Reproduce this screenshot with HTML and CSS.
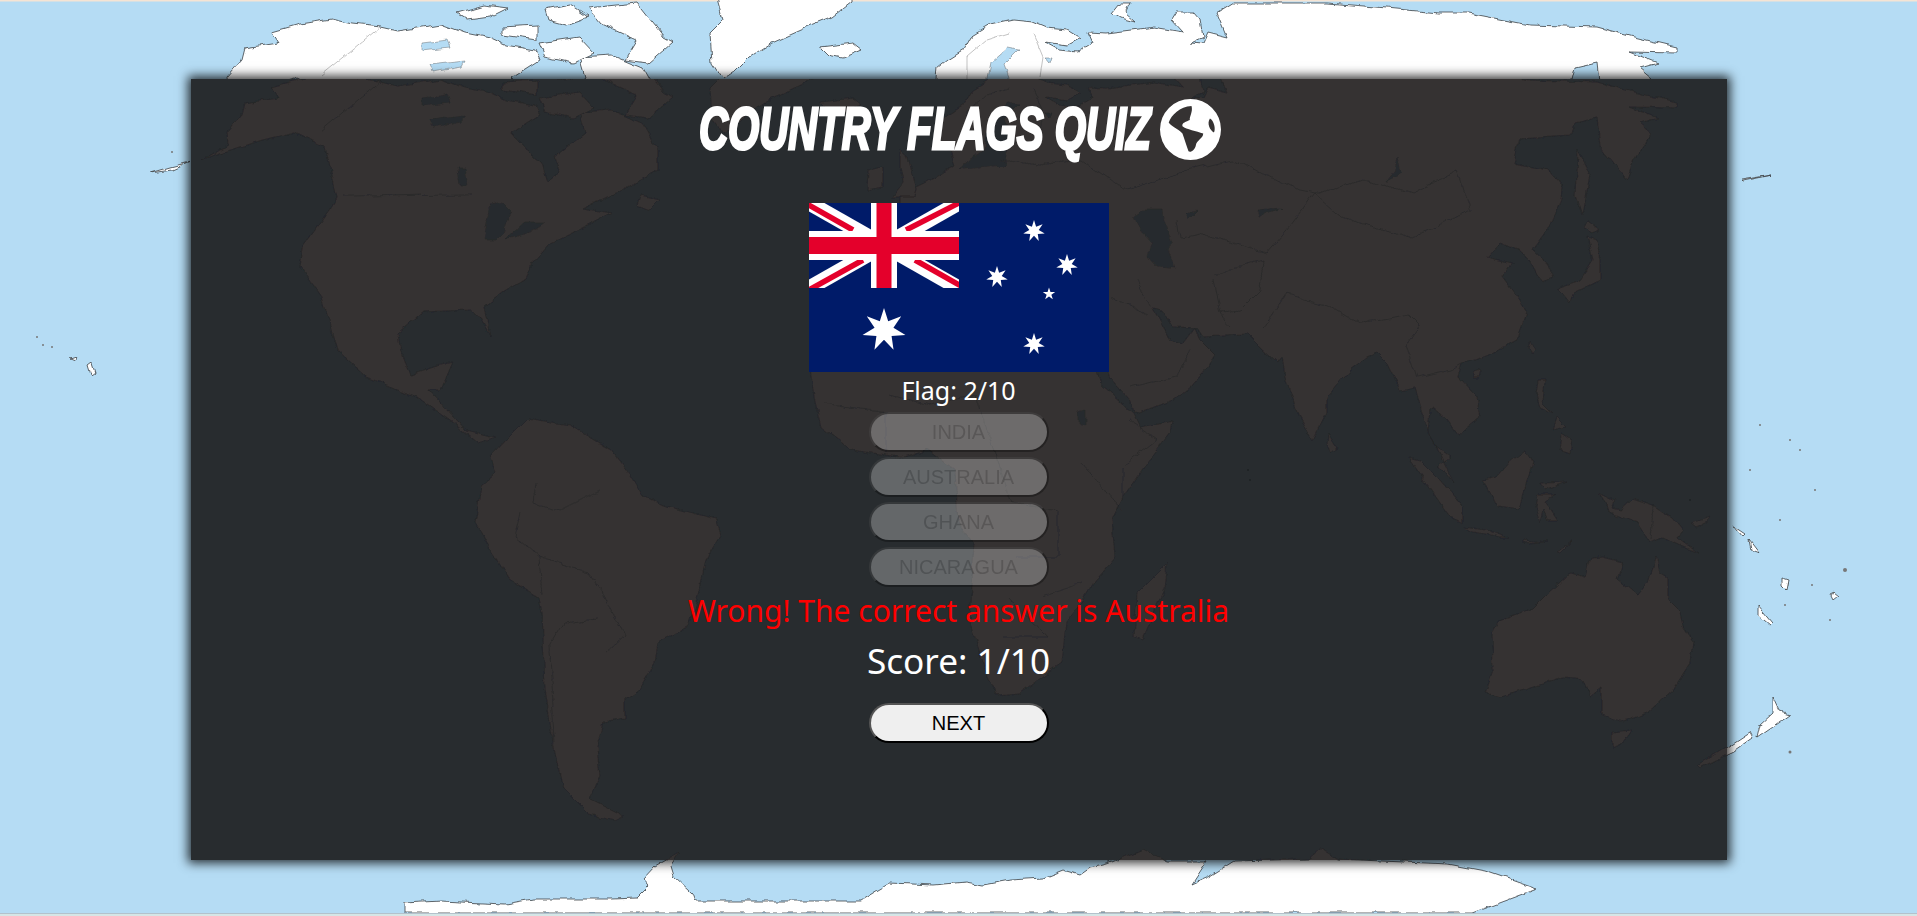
FILE: index.html
```html
<!DOCTYPE html>
<html lang="en">
<head>
<meta charset="utf-8">
<title>Country Flags Quiz</title>
<link rel="stylesheet" href="styles.css">
</head>
<body>
<svg class="world" viewBox="0 0 1917 916" aria-hidden="true">
  <defs>
    <filter id="rough" filterUnits="userSpaceOnUse" x="-20" y="-120" width="1960" height="1060">
      <feTurbulence type="fractalNoise" baseFrequency=".07" numOctaves="3" seed="4"/>
      <feDisplacementMap in="SourceGraphic" scale="6" xChannelSelector="R" yChannelSelector="G"/>
    </filter>
    <g id="continents">
      <polygon points="245,103 279,98 272,87 300,79 331,74 352,79 380,82 398,86 429,81 441,79 465,88 490,93 505,100 535,105 539,115 511,133 520,143 542,163 548,182 560,173 554,157 585,133 579,112 612,110 643,123 658,150 658,170 622,190 582,208 612,213 594,223 551,243 533,263 524,280 502,293 484,307 490,335 481,320 472,310 423,312 398,333 401,353 410,375 441,365 453,362 441,390 429,390 465,430 496,437 478,443 453,423 416,397 367,377 337,350 322,297 300,267 303,247 331,207 337,197 325,147 294,132 263,140 220,153 202,160 228,145 227,132 242,115"/>
      <polygon points="456,68 484,60 508,63 490,72 468,75"/>
      <polygon points="545,65 570,60 588,72 566,80 548,75"/>
      <polygon points="588,63 637,58 664,92 673,97 649,118 625,115 637,95 600,78"/>
      <polygon points="539,98 579,92 594,108 573,118 545,112"/>
      <polygon points="502,82 537,80 537,95 502,90"/>
      <polygon points="640,195 660,200 650,210 637,205"/>
      <polygon points="716,50 851,50 851,58 833,72 808,82 772,98 750,112 735,127 723,135 712,118 710,88 723,75"/>
      <polygon points="820,102 853,98 862,105 843,113 828,110"/>
      <polygon points="1120,58 1130,58 1125,68 1135,77 1120,73 1112,68"/>
      <polygon points="527,418 570,425 612,450 631,476 643,496 667,506 716,519 720,536 704,563 698,596 689,626 658,643 655,663 640,689 625,699 625,719 603,723 597,746 600,776 591,799 625,816 615,821 588,814 563,789 554,749 545,689 542,613 539,598 508,579 475,523 481,486 496,473 490,456 508,437"/>
      <polygon points="815,403 810,370 830,310 860,270 900,255 960,260 1020,270 1060,290 1090,340 1100,383 1133,413 1140,427 1172,420 1170,433 1147,463 1123,497 1112,520 1115,557 1093,583 1081,603 1066,623 1062,663 1020,693 997,695 985,670 970,623 974,543 958,523 955,470 928,450 905,458 851,450 821,427"/>
      <polygon points="1167,563 1164,589 1143,639 1134,636 1137,593"/>
      <polygon points="937,123 935,145 950,152 955,165 927,182 900,195 900,210 880,290 1000,280 1090,310 1109,377 1130,400 1133,412 1140,413 1173,400 1190,387 1207,367 1215,355 1200,340 1195,327 1183,343 1170,340 1153,308 1162,310 1173,327 1197,328 1203,337 1248,335 1260,347 1277,363 1282,357 1285,377 1300,417 1313,440 1327,413 1327,397 1350,370 1367,357 1377,353 1387,363 1400,390 1415,387 1422,413 1430,437 1440,453 1455,483 1447,473 1437,467 1450,457 1437,448 1428,433 1430,410 1433,408 1447,420 1458,435 1480,417 1477,397 1458,377 1462,363 1477,360 1493,353 1517,340 1527,313 1520,300 1503,277 1513,263 1487,257 1500,243 1517,250 1530,262 1537,275 1543,282 1553,278 1547,263 1533,250 1548,230 1562,200 1563,187 1548,170 1514,163 1520,138 1572,135 1575,123 1597,118 1600,147 1627,180 1634,160 1652,133 1640,123 1658,118 1630,107 1676,108 1676,102 1634,92 1597,82 1530,80 1468,68 1438,68 1376,62 1327,58 1233,58 1217,68 1227,92 1207,87 1202,98 1192,97 1203,92 1200,75 1193,67 1177,67 1172,75 1183,87 1153,82 1147,83 1107,88 1087,87 1092,98 1078,107 1060,105 1045,97 1067,100 1080,93 1067,85 1047,83 1033,77 1013,75 990,80 970,92 963,105 947,115"/>
      <polygon points="900,150 908,157 917,190 915,197 892,197 903,183 900,167"/>
      <polygon points="868,170 883,167 883,187 867,190"/>
      <polygon points="1328,433 1337,448 1330,453 1327,443"/>
      <polygon points="1557,288 1580,280 1593,260 1587,237 1597,240 1600,260 1600,280 1573,293 1570,303 1562,293"/>
      <polygon points="1583,227 1593,233 1600,230 1587,220"/>
      <polygon points="1578,150 1590,175 1583,215 1576,195"/>
      <polygon points="1530,340 1535,350 1532,355 1528,348"/>
      <polygon points="1473,372 1482,370 1480,378 1473,378"/>
      <polygon points="1537,380 1545,380 1543,403 1553,413 1540,407 1535,393"/>
      <polygon points="1562,433 1572,440 1570,453 1560,450"/>
      <polygon points="1557,417 1567,427 1552,430"/>
      <polygon points="1525,450 1533,463 1527,480 1520,510 1497,507 1483,480 1497,477 1510,462"/>
      <polygon points="1408,457 1420,460 1440,480 1463,507 1463,523 1450,517 1433,493"/>
      <polygon points="1463,527 1487,530 1508,538 1500,538 1473,533"/>
      <polygon points="1537,495 1557,495 1545,502 1557,520 1548,520 1543,510 1540,522 1535,507"/>
      <polygon points="1540,483 1567,482 1545,490"/>
      <polygon points="1600,493 1615,500 1612,508 1620,510 1633,498 1653,505 1673,518 1683,530 1677,537 1698,552 1680,545 1663,537 1650,543 1637,523 1610,513 1608,505"/>
      <polygon points="1523,540 1547,542 1523,543"/>
      <polygon points="1557,552 1573,540 1560,553"/>
      <polygon points="1692,523 1710,517 1707,523 1697,527"/>
      <polygon points="1590,558 1603,557 1623,562 1617,578 1638,595 1647,583 1656,555 1660,573 1668,578 1668,600 1680,612 1683,627 1693,642 1690,663 1673,690 1647,713 1623,722 1602,715 1602,687 1590,697 1583,680 1563,678 1530,688 1500,697 1485,693 1493,670 1492,633 1500,620 1533,608 1548,593 1570,573 1585,577"/>
      <polygon points="1612,732 1632,730 1623,745 1612,750"/>
    </g>
    <g id="polar">
      <polygon points="404,903 441,901 505,904 533,899 612,899 637,898 649,886 643,879 655,866 667,859 680,852 671,866 674,876 692,893 695,901 860,901 873,893 890,883 933,885 967,882 983,885 1010,880 1043,878 1063,870 1080,875 1090,868 1106,864 1143,849 1167,861 1207,861 1192,884 1210,876 1234,861 1308,859 1320,849 1338,859 1448,864 1485,871 1537,889 1497,904 1473,913 404,913"/>
      <polygon points="1773,697 1780,712 1790,715 1773,727 1757,738 1760,725 1773,713"/>
      <polygon points="1750,732 1753,738 1733,752 1700,768 1697,765 1727,747"/>
      <polygon points="1758,605 1773,623 1770,625 1758,615"/>
      <polygon points="1782,578 1788,580 1786,590 1782,586"/>
      <polygon points="1733,527 1745,535 1742,538"/>
      <polygon points="1750,540 1760,553 1752,550"/>
      <polygon points="150,173 170,167 190,162 172,170"/>
      <polygon points="1741,180 1771,175 1742,181"/>
      <polygon points="92,362 95,372 91,375 88,365"/>
      <polygon points="70,358 76,356 75,360"/>
      <polygon points="1833,592 1838,596 1833,600 1831,596"/>
    </g>
    <g id="specks">
      <circle cx="52" cy="347" r="1"/><circle cx="43" cy="345" r="1"/><circle cx="37" cy="337" r="1"/>
      <circle cx="172" cy="152" r="1"/><circle cx="1760" cy="425" r="1"/><circle cx="1790" cy="440" r="1"/>
      <circle cx="1800" cy="450" r="1"/><circle cx="1815" cy="490" r="1"/><circle cx="1845" cy="570" r="2"/>
      <circle cx="1790" cy="752" r="1.5"/><circle cx="1812" cy="585" r="1"/><circle cx="1750" cy="470" r="1"/>
      <circle cx="1830" cy="620" r="1"/><circle cx="1780" cy="520" r="1"/><circle cx="1785" cy="605" r="1"/>
      <circle cx="1248" cy="470" r="1"/><circle cx="1250" cy="480" r="1"/><circle cx="1690" cy="500" r="1"/>
    </g>
    <g id="lakes">
      <polygon points="422,98 447,95 450,102 422,105"/>
      <polygon points="429,120 465,116 462,122 432,127"/>
      <polygon points="484,240 490,205 505,203 512,210 503,232 495,240"/>
      <polygon points="505,240 525,222 545,222 530,232"/>
      <polygon points="458,168 464,168 467,185 460,185"/>
      <polygon points="990,118 1007,103 1018,105 1005,118 1010,132 1008,150 1005,165 960,168 972,158 985,150 987,133"/>
      <polygon points="1133,217 1143,210 1162,210 1163,220 1172,242 1168,250 1175,268 1157,267 1148,257 1152,243 1140,230"/>
      <polygon points="1258,210 1282,208 1267,213 1260,218"/>
      <polygon points="1187,213 1198,210 1188,220"/>
      <polygon points="1398,157 1401,173 1386,182 1394,172"/>
      <polygon points="1045,112 1052,112 1050,118"/>
      <polygon points="1078,412 1085,410 1085,425 1078,423"/>
    </g>
    <g id="borders">
      <polyline points="343,196 472,195"/>
      <polyline points="380,82 321,130"/>
      <polyline points="1315,193 1340,217 1413,238 1471,210 1456,170 1413,193 1364,180 1315,193"/>
      <polyline points="1307,300 1327,307 1360,322 1385,320 1410,315 1420,325 1405,345 1417,377 1450,370 1462,363"/>
      <polyline points="1137,280 1150,307"/>
      <polyline points="1213,280 1220,313 1230,327"/>
      <polyline points="1177,220 1180,237 1200,233 1233,243 1267,253 1290,225 1315,193"/>
      <polyline points="1213,277 1243,265 1263,260 1260,290 1240,310 1220,312"/>
      <polyline points="1263,327 1287,293 1307,300"/>
      <polyline points="1110,297 1147,315"/>
      <polyline points="1130,387 1177,377 1190,350"/>
      <polyline points="1130,420 1157,440 1123,467 1123,497"/>
      <polyline points="825,403 886,413 886,453"/>
      <polyline points="1081,463 1123,510"/>
      <polyline points="1008,597 1047,637 1004,637"/>
      <polyline points="1043,597 1081,583"/>
      <polyline points="1012,503 1058,510 1058,557 1016,557"/>
      <polyline points="890,395 930,405 975,395 1012,503"/>
      <polyline points="520,513 515,536 539,556 542,596"/>
      <polyline points="539,556 588,573 600,589 625,636 606,653"/>
      <polyline points="551,643 563,623 597,619"/>
      <polyline points="551,643 554,749"/>
      <polyline points="536,483 533,503 560,510 600,490"/>
      <polyline points="1127,190 1187,170 1233,160 1300,190 1315,193"/>
      <polyline points="1033,88 1043,112 1040,132"/>
      <polyline points="1010,88 987,95 967,112 967,135"/>
      <polyline points="1653,505 1651,540"/>
      <polyline points="1000,160 1040,165 1080,160 1127,190"/>
    </g>
  </defs>
  <rect class="strip-top" width="1917" height="1.5"/>
  <use class="land-outer" href="#continents" transform="translate(0 -55)" filter="url(#rough)"/>
  <use class="lake-outer" href="#lakes" transform="translate(0 -55)" filter="url(#rough)"/>
  <use class="border-outer" href="#borders" transform="translate(0 -55)" filter="url(#rough)"/>
  <use class="land-outer" href="#polar" filter="url(#rough)"/>
  <use class="speck-outer" href="#specks"/>
  <rect class="strip-line" y="913" width="1917" height="1"/>
  <rect class="strip-bottom" y="914" width="1917" height="2"/>
</svg>

<main class="panel">
  <svg class="panel-map" viewBox="0 0 1917 916" aria-hidden="true">
    <use class="land-inner" href="#continents" filter="url(#rough)"/>
    <use class="lake-inner" href="#lakes" filter="url(#rough)"/>
    <use class="border-inner" href="#borders" filter="url(#rough)"/>
    <use class="land-inner" href="#polar" filter="url(#rough)"/>
    <use class="speck-inner" href="#specks"/>
  </svg>

  <div class="content">
    <h1 class="title">
      <span class="title-text">COUNTRY FLAGS QUIZ</span>
      <svg class="globe" viewBox="61 27 182 182" aria-hidden="true">
        <path fill-rule="evenodd" d="M61,118a91,91 0 1,0 182,0a91,91 0 1,0 -182,0Z M87,97C95,75 120,50 155,48C160,65 148,80 150,90C140,95 125,98 128,108C140,118 170,122 190,130C190,145 170,150 168,165C165,180 152,188 146,183C140,165 135,150 128,130C115,115 95,110 87,97Z M210,85C222,92 228,115 222,127C210,120 200,100 210,85Z"/>
      </svg>
    </h1>

    <svg class="flag" viewBox="0 0 300 169" role="img" aria-label="Flag of Australia">
      <defs>
        <polygon id="star7" points="0,-1 .191,-.396 .782,-.623 .429,-.098 .975,.223 .344,.274 .434,.901 0,.44 -.434,.901 -.344,.274 -.975,.223 -.429,-.098 -.782,-.623 -.191,-.396"/>
        <polygon id="star5" points="0,-1 .225,-.309 .951,-.309 .363,.118 .588,.809 0,.382 -.588,.809 -.363,.118 -.951,-.309 -.225,-.309"/>
      </defs>
      <rect class="flag-blue" width="300" height="169"/>
      <svg width="150" height="85" viewBox="0 0 150 85">
        <line class="jack-white" x1="-5" y1="-3" x2="155" y2="88"/>
        <line class="jack-white" x1="155" y1="-3" x2="-5" y2="88"/>
        <line class="jack-red" x1="-2" y1="1" x2="44" y2="27"/>
        <line class="jack-red" x1="150" y1="0" x2="97" y2="27"/>
        <line class="jack-red" x1="152" y1="83" x2="106" y2="57"/>
        <line class="jack-red" x1="0" y1="87" x2="54" y2="57"/>
        <rect class="flag-white" x="62" width="26" height="85"/>
        <rect class="flag-white" y="28" width="150" height="29"/>
        <rect class="flag-red" x="67.5" width="15" height="85"/>
        <rect class="flag-red" y="34" width="150" height="17"/>
      </svg>
      <use class="flag-white" href="#star7" transform="translate(75 127) scale(22)"/>
      <use class="flag-white" href="#star7" transform="translate(225 28) scale(11)"/>
      <use class="flag-white" href="#star7" transform="translate(258 62) scale(11)"/>
      <use class="flag-white" href="#star7" transform="translate(188 74) scale(11)"/>
      <use class="flag-white" href="#star5" transform="translate(240 91) scale(6.5)"/>
      <use class="flag-white" href="#star7" transform="translate(225 141) scale(11)"/>
    </svg>

    <p class="counter">Flag: 2/10</p>

    <div class="options">
      <button class="option" disabled>INDIA</button>
      <button class="option" disabled>AUSTRALIA</button>
      <button class="option" disabled>GHANA</button>
      <button class="option" disabled>NICARAGUA</button>
    </div>

    <p class="result">Wrong! The correct answer is Australia</p>
    <p class="score">Score: 1/10</p>
    <button class="next">NEXT</button>
  </div>
</main>
</body>
</html>
```

FILE: styles.css
```css
* { box-sizing: border-box; }

html, body {
  margin: 0;
  height: 100%;
}

body {
  position: relative;
  display: flex;
  justify-content: center;
  align-items: flex-start;
  padding-top: 79px;
  height: 916px;
  overflow: hidden;
  background: #b5dcf4;
  font-family: "Noto Sans", sans-serif;
}

.world {
  position: absolute;
  left: 0;
  top: 0;
  width: 1917px;
  height: 916px;
}

.strip-top { fill: #f5e4d4; }
.strip-line { fill: #b3c2cc; }
.strip-bottom { fill: #d5e6e6; }

.land-outer { fill: #fff; stroke: #3c4145; stroke-width: .8; }
.lake-outer { fill: #b5dcf4; stroke: #6a7075; stroke-width: .5; }
.border-outer { fill: none; stroke: #b4b4b4; stroke-width: .8; }
.speck-outer { fill: #777; }

.panel {
  position: relative;
  width: 1536px;
  height: 781px;
  overflow: hidden;
  flex: none;
  background: #282c2f;
  box-shadow: 0 0 10px 3px rgba(0, 0, 0, .8);
}

.panel-map {
  position: absolute;
  left: -190.5px;
  top: -79px;
  width: 1917px;
  height: 916px;
}

.land-inner { fill: #343030; stroke: #222427; stroke-width: .7; }
.lake-inner { fill: #282c2f; stroke: #222427; stroke-width: .5; }
.border-inner { fill: none; stroke: #29292a; stroke-width: .9; }
.speck-inner { fill: #1d2023; }

.content {
  position: relative;
  display: flex;
  flex-direction: column;
  align-items: center;
}

.title {
  display: flex;
  align-items: center;
  justify-content: center;
  gap: 8px;
  height: 124px;
  margin: 0;
  padding-bottom: 24px;
  color: #fff;
}

.title-text {
  display: block;
  width: 672px;
  margin: 0 -108px;
  font-family: "Liberation Sans", sans-serif;
  font-size: 60px;
  font-style: italic;
  font-weight: 700;
  line-height: 1;
  text-align: center;
  white-space: nowrap;
  transform: scaleX(.67);
  -webkit-text-stroke: 3px #fff;
}

.globe {
  width: 61px;
  height: 61px;
  fill: #fff;
  flex: none;
}

.flag {
  display: block;
  width: 300px;
  height: 169px;
}

.flag-blue { fill: #001b69; }
.flag-white { fill: #fff; }
.flag-red { fill: #e4002b; }
.jack-white { stroke: #fff; stroke-width: 15; }
.jack-red { stroke: #e4002b; stroke-width: 5.5; }

.counter {
  margin: 0;
  height: 40px;
  color: #fff;
  font-size: 25px;
  line-height: 36px;
}

.options {
  display: flex;
  flex-direction: column;
  gap: 5px;
}

.option,
.next {
  display: block;
  width: 180px;
  height: 40px;
  padding: 0;
  border: 2px outset #000;
  border-radius: 20px;
  background: #efefef;
  font-family: "Liberation Sans", Arial, sans-serif;
  font-size: 20px;
}

.option {
  color: rgba(16, 16, 16, .3);
  opacity: .3;
}

.next { color: #000; }

.result {
  margin: 2px 0 0;
  height: 44px;
  color: #f00;
  font-size: 30px;
  line-height: 44px;
  white-space: nowrap;
}

.score {
  margin: 0;
  height: 54px;
  color: #fff;
  font-size: 35.2px;
  line-height: 54px;
}

.next { margin-top: 16px; }
```
